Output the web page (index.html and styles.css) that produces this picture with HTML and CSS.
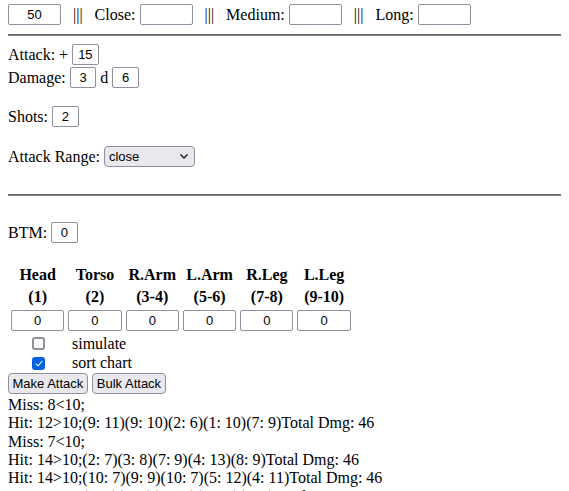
FILE: index.html
```html
<!DOCTYPE html>
<html lang="en">
<head>
<meta charset="utf-8">
<title>Attack Calculator</title>
<link rel="stylesheet" href="styles.css">
</head>
<body>
<div class="row ranges">
  <input class="field wide" value="50">
  <span class="sep">|||</span>
  <span class="lbl">Close:</span><input class="field wide" value="">
  <span class="sep">|||</span>
  <span class="lbl">Medium:</span><input class="field wide" value="">
  <span class="sep">|||</span>
  <span class="lbl">Long:</span><input class="field wide" value="">
</div>
<hr class="rule rule-top">
<div class="row attack"><span class="lbl">Attack: +</span><input class="field tiny" value="15"></div>
<div class="row damage"><span class="lbl">Damage:</span><input class="field tiny" value="3"><span class="lbl mid">d</span><input class="field tiny" value="6"></div>
<div class="row shots"><span class="lbl">Shots:</span><input class="field tiny" value="2"></div>
<div class="row range"><span class="lbl">Attack Range:</span>
  <span class="select-wrap">
    <select class="picker">
      <option selected>close</option>
      <option>medium</option>
      <option>long</option>
    </select>
    <svg class="chev" width="8" height="5" viewBox="0 0 8 5"><path d="M0.8 0.8 L4 4 L7.2 0.8" fill="none" stroke="#1b1b1f" stroke-width="1.4" stroke-linecap="round" stroke-linejoin="round"/></svg>
  </span>
</div>
<hr class="rule rule-mid">
<div class="row btm"><span class="lbl">BTM:</span><input class="field tiny" value="0"></div>
<table class="locs">
  <tr>
    <th>Head</th>
    <th>Torso</th>
    <th>R.Arm</th>
    <th>L.Arm</th>
    <th>R.Leg</th>
    <th>L.Leg</th>
  </tr>
  <tr>
    <th>(1)</th>
    <th>(2)</th>
    <th>(3-4)</th>
    <th>(5-6)</th>
    <th>(7-8)</th>
    <th>(9-10)</th>
  </tr>
  <tr>
    <td><input class="field loc" value="0"></td>
    <td><input class="field loc" value="0"></td>
    <td><input class="field loc" value="0"></td>
    <td><input class="field loc" value="0"></td>
    <td><input class="field loc" value="0"></td>
    <td><input class="field loc" value="0"></td>
  </tr>
</table>
<div class="opt"><input type="checkbox" class="check" id="sim"><label for="sim" class="opt-lbl">simulate</label></div>
<div class="opt"><input type="checkbox" class="check" id="sort" checked><label for="sort" class="opt-lbl">sort chart</label></div>
<div class="actions"><button class="btn">Make Attack</button><button class="btn">Bulk Attack</button></div>
<div class="log">
  <div>Miss: 8&lt;10;</div>
  <div>Hit: 12&gt;10;(9: 11)(9: 10)(2: 6)(1: 10)(7: 9)Total Dmg: 46</div>
  <div>Miss: 7&lt;10;</div>
  <div>Hit: 14&gt;10;(2: 7)(3: 8)(7: 9)(4: 13)(8: 9)Total Dmg: 46</div>
  <div>Hit: 14&gt;10;(10: 7)(9: 9)(10: 7)(5: 12)(4: 11)Total Dmg: 46</div>
  <div>Hit: 14&gt;10;(3: 8)(2: 7)(10: 4)(10: 7)(9: 6)Total Dmg: 46</div>
</div>
</body>
</html>
```

FILE: styles.css
```css
html, body {
  overflow: hidden;
}
body {
  margin: 4px 8px 0;
  font-family: "Liberation Serif", "Times New Roman", serif;
  font-size: 16px;
  color: #000;
  background: #fff;
}
.row {
  display: flex;
  align-items: center;
  height: 21px;
}
.sep {
  margin: 0 12px;
}
.lbl {
  margin-right: 4px;
  white-space: pre;
}
.lbl.mid {
  margin: 0 4px;
}
.field {
  box-sizing: border-box;
  height: 21px;
  border: 1px solid #8f8f9d;
  border-radius: 2px;
  padding: 0 2px;
  font-family: "Liberation Sans", Arial, sans-serif;
  font-size: 13px;
  color: #000;
  background: #fff;
  text-align: center;
  outline: none;
}
.field.wide {
  width: 53px;
}
.field.tiny {
  width: 26.5px;
}
.field.loc {
  display: block;
  width: 53.3px;
}
.rule {
  border: 0;
  border-top: 1px solid #5f5f5f;
  border-bottom: 1px solid #8a8a8a;
  height: 0;
  margin: 0 -8px 0 0;
}
.rule-top {
  margin-top: 9px;
}
.attack {
  margin-top: 8px;
}
.damage {
  margin-top: 2px;
}
.shots {
  margin-top: 18px;
}
.range {
  margin-top: 19px;
}
.rule-mid {
  margin-top: 27px;
}
.btm {
  margin-top: 26px;
}
.select-wrap {
  position: relative;
  display: inline-block;
  height: 21px;
}
.picker {
  appearance: none;
  -webkit-appearance: none;
  box-sizing: border-box;
  width: 91px;
  height: 21px;
  border: 1px solid #8f8f9d;
  border-radius: 4px;
  background: #e9e9ed;
  padding: 0 0 0 4px;
  font-family: "Liberation Sans", Arial, sans-serif;
  font-size: 13px;
  color: #000;
  outline: none;
}
.chev {
  position: absolute;
  left: 76px;
  top: 8px;
  pointer-events: none;
}
.locs {
  border-spacing: 2px;
  margin-top: 20px;
}
.locs th {
  padding: 1px;
  font-weight: bold;
  text-align: center;
  line-height: 18.4px;
}
.locs td {
  padding: 0 1px 1px;
}
.opt {
  display: flex;
  align-items: center;
  height: 19.5px;
}
.check {
  appearance: none;
  -webkit-appearance: none;
  position: relative;
  box-sizing: border-box;
  width: 13px;
  height: 13px;
  margin: 0 0 0 24px;
  border: 2px solid #8f8f9d;
  border-radius: 3px;
  background: #fff;
}
.check:checked {
  background: #0060df;
  border-color: #0060df;
}
.check:checked::after {
  content: "";
  position: absolute;
  left: 2.5px;
  top: 0px;
  width: 3px;
  height: 6px;
  border: solid #fff;
  border-width: 0 1.6px 1.6px 0;
  transform: rotate(40deg);
}
.opt-lbl {
  margin-left: 27px;
}
.actions {
  display: flex;
  gap: 4.5px;
  height: 21px;
}
.btn {
  box-sizing: border-box;
  height: 21px;
  padding: 0 3.5px;
  border: 1px solid #8f8f9d;
  border-radius: 4px;
  background: #e9e9ed;
  font-family: "Liberation Sans", Arial, sans-serif;
  font-size: 13px;
  color: #000;
}
.log {
  margin-top: 2px;
  line-height: 18.4px;
}
```
